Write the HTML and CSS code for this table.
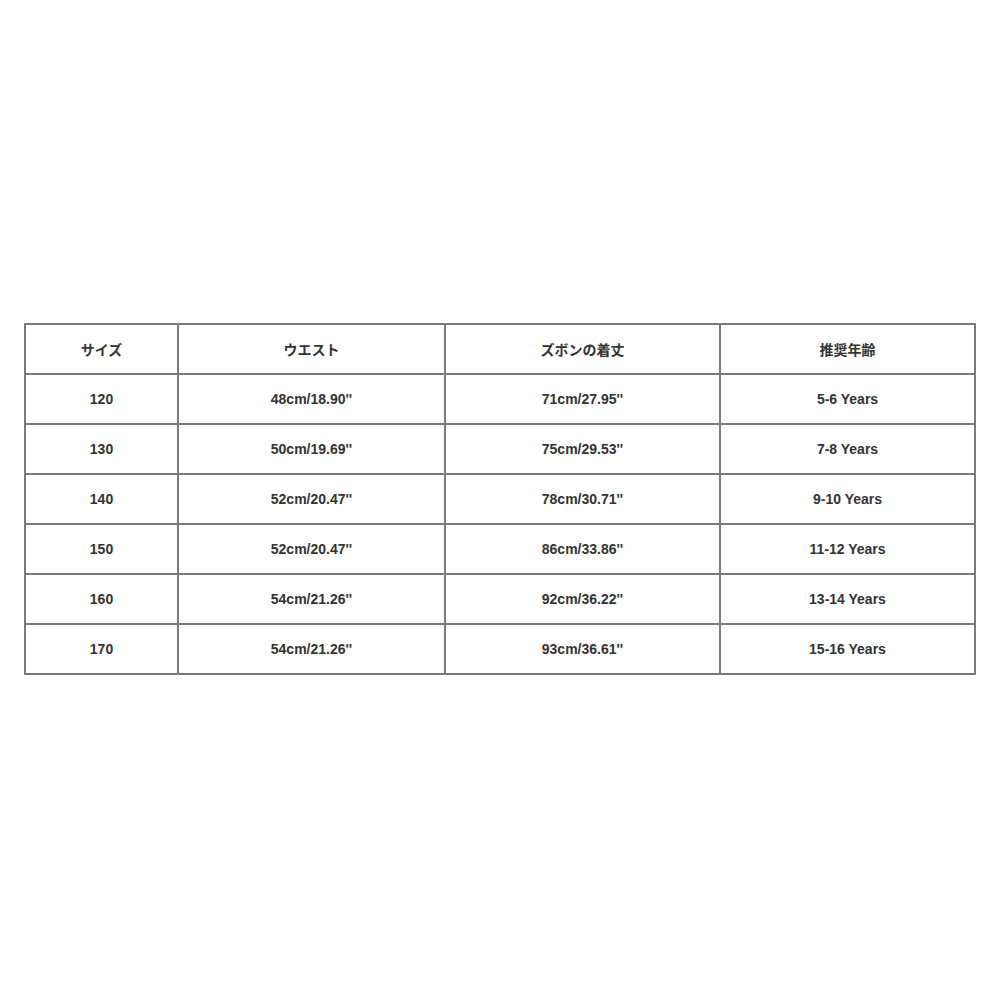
FILE: index.html
```html
<!DOCTYPE html>
<html lang="ja">
<head>
<meta charset="utf-8">
<link rel="stylesheet" href="styles.css">
</head>
<body>
<main class="page">
<table class="size-table">
<colgroup>
<col class="c1"><col class="c2"><col class="c3"><col class="c4">
</colgroup>
<tr><td>サイズ</td><td>ウエスト</td><td>ズボンの着丈</td><td>推奨年齢</td></tr>
<tr><td>120</td><td>48cm/18.90''</td><td>71cm/27.95''</td><td>5-6 Years</td></tr>
<tr><td>130</td><td>50cm/19.69''</td><td>75cm/29.53''</td><td>7-8 Years</td></tr>
<tr><td>140</td><td>52cm/20.47''</td><td>78cm/30.71''</td><td>9-10 Years</td></tr>
<tr><td>150</td><td>52cm/20.47''</td><td>86cm/33.86''</td><td>11-12 Years</td></tr>
<tr><td>160</td><td>54cm/21.26''</td><td>92cm/36.22''</td><td>13-14 Years</td></tr>
<tr><td>170</td><td>54cm/21.26''</td><td>93cm/36.61''</td><td>15-16 Years</td></tr>
</table>
</main>
</body>
</html>
```
FILE: styles.css
```css
html, body {
  margin: 0;
  padding: 0;
  background: #fff;
}
.page {
  padding: 323px 0 0 24px;
}
.size-table {
  border-collapse: collapse;
  table-layout: fixed;
  width: 950px;
  font-family: "Liberation Sans", Arial, "Noto Sans CJK JP", sans-serif;
  font-weight: bold;
  font-size: 14px;
  color: #333;
}
.c1 { width: 153px; }
.c2 { width: 267px; }
.c3 { width: 275px; }
.c4 { width: 255px; }
.size-table td {
  border: 2px solid #7a7a7a;
  height: 48px;
  padding: 0;
  text-align: center;
  vertical-align: middle;
}
```
